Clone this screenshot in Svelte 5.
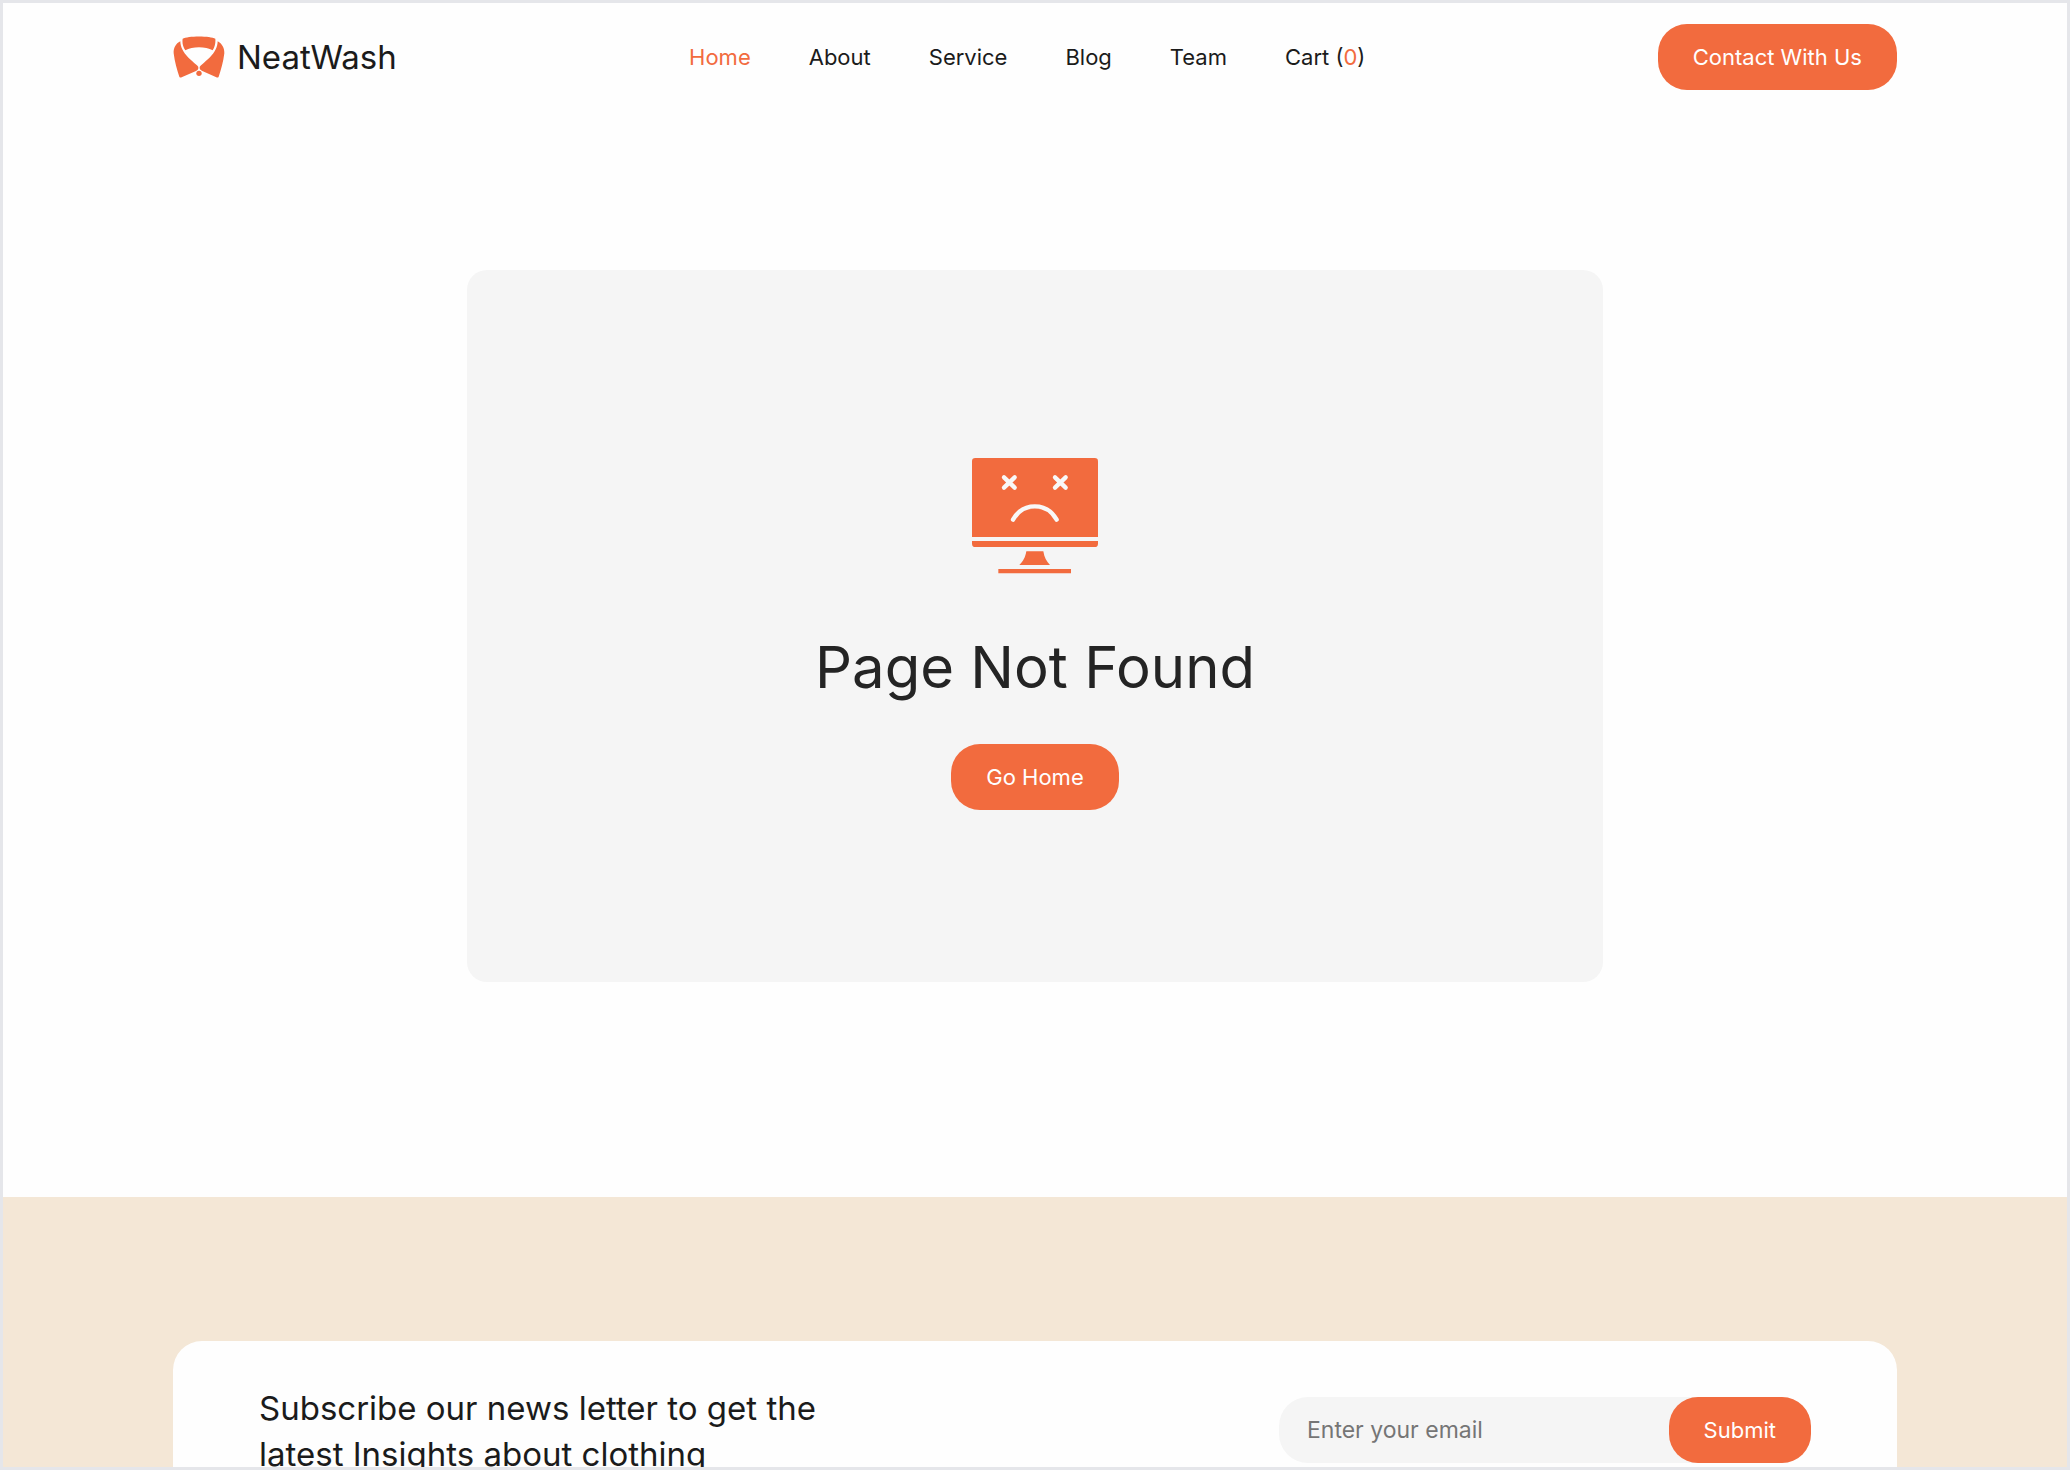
<script lang="ts">
  type NavItem = { label: string; href: string; count?: number };

  const nav: NavItem[] = [
    { label: 'Home', href: '#home' },
    { label: 'About', href: '#about' },
    { label: 'Service', href: '#service' },
    { label: 'Blog', href: '#blog' },
    { label: 'Team', href: '#team' },
    { label: 'Cart', href: '#cart', count: 0 }
  ];

  let active = $state('Home');
  let email = $state('');
</script>

<div class="frame">
  <header class="container">
    <a class="brand" href="#home">
      <svg width="52" height="42" viewBox="0 0 156 126" fill="#f26b3e" aria-hidden="true">
        <path d="M29 8C44-1 112-1 127 8C128 20 126 32 119 43C98 31 58 31 37 43C30 33 27 20 29 8Z" />
        <path d="M22 16C8 23 1 36 2 52C5 77 12 101 19 122Q21 126 26 124L69 105C75 102 76 99 76 95C76 91 74 89 70 86C53 72 36 57 29 42C24 33 22 24 22 16Z" />
        <path d="M134 16C147 23 155 36 154 52C151 77 144 101 137 122Q135 126 130 124L88 105C82 102 80 99 80 95C80 91 82 89 86 86C103 72 120 57 127 42C132 33 134 24 134 16Z" />
        <circle cx="78" cy="112" r="8" />
      </svg>
      <span>NeatWash</span>
    </a>

    <nav>
      {#each nav as item}
        <a href={item.href} class:active={active === item.label} onclick={() => (active = item.label)}>
          {item.label}{#if item.count !== undefined}&nbsp;(<span class="count">{item.count}</span>){/if}
        </a>
      {/each}
    </nav>

    <a class="btn" href="#contact">Contact With Us</a>
  </header>

  <main>
    <section class="not-found">
      <svg width="126" height="116" viewBox="0 0 378 348" aria-hidden="true">
        <g fill="#f26b3e">
          <path d="M10 0H368Q378 0 378 10V237H0V10Q0 0 10 0Z" />
          <path d="M0 249H378V257Q378 267 368 267H10Q0 267 0 257Z" />
          <path d="M163 280H214C217 298 223 310 234 321H142C154 309 160 298 163 280Z" />
          <path d="M79 333H297V346H79Z" />
        </g>
        <g fill="none" stroke="#f8f8f8" stroke-width="13" stroke-linecap="round">
          <path d="M96 58L128 89M128 58L96 89" />
          <path d="M249 58L281 89M281 58L249 89" />
          <path d="M123 185C153 132 224 132 254 185" />
        </g>
      </svg>
      <h1>Page Not Found</h1>
      <a class="btn" href="#home">Go Home</a>
    </section>
  </main>

  <section class="newsletter">
    <div class="container panel">
      <h2>Subscribe our news letter to get the latest Insights about clothing</h2>
      <form onsubmit={(e) => e.preventDefault()}>
        <input type="email" aria-label="Email address" placeholder="Enter your email" bind:value={email} />
        <button class="btn" type="submit">Submit</button>
      </form>
    </div>
  </section>
</div>

<style>
  :global(body) { margin: 0; }

  .frame {
    box-sizing: border-box;
    display: flex;
    flex-direction: column;
    height: 100vh;
    overflow: hidden;
    border: 3px solid #e5e6ea;
    background: #fefefe;
    color: #1b1b1b;
    font-family: Inter, 'Liberation Sans', sans-serif;
    font-size: 22px;
    line-height: 30px;
  }
  .frame > * { flex-shrink: 0; }
  .container {
    box-sizing: border-box;
    width: calc(100% - 48px);
    max-width: 1724px;
    margin: 0 auto;
  }
  a { color: inherit; text-decoration: none; }

  header {
    display: flex;
    align-items: center;
    justify-content: space-between;
    padding: 21px 0;
  }
  .brand { display: flex; align-items: center; gap: 12px; font-size: 33px; }
  nav { display: flex; gap: 58px; }
  .active, .count { color: #f26b3e; }

  .btn {
    display: block;
    padding: 18px 35px;
    border: 0;
    border-radius: 29px;
    background: #f26b3e;
    color: #fff;
    font: inherit;
  }

  main { padding: 159px 24px 215px; }
  .not-found {
    box-sizing: border-box;
    display: flex;
    flex-direction: column;
    align-items: center;
    max-width: 1136px;
    margin: 0 auto;
    padding: 188px 24px 172px;
    border-radius: 20px;
    background: #f5f5f5;
  }
  h1 {
    margin: 56px 0 40px;
    color: #242424;
    font-size: 58px;
    line-height: 74px;
    font-weight: 400;
  }

  .newsletter { padding: 144px 0; background: #f4e7d6; }
  .panel {
    display: flex;
    align-items: flex-start;
    justify-content: space-between;
    padding: 44px 86px;
    border-radius: 29px;
    background: #fefefe;
  }
  h2 {
    max-width: 600px;
    margin: 0;
    font-size: 33px;
    line-height: 46px;
    font-weight: 400;
  }
  form {
    display: flex;
    width: 532px;
    margin-top: 12px;
    border-radius: 29px;
    background: #f5f5f5;
  }
  input {
    flex: 1;
    min-width: 0;
    padding: 0 28px;
    border: 0;
    outline: 0;
    background: none;
    color: inherit;
    font: inherit;
    font-size: 23px;
  }
  input::placeholder { color: #757575; opacity: 1; }
</style>
